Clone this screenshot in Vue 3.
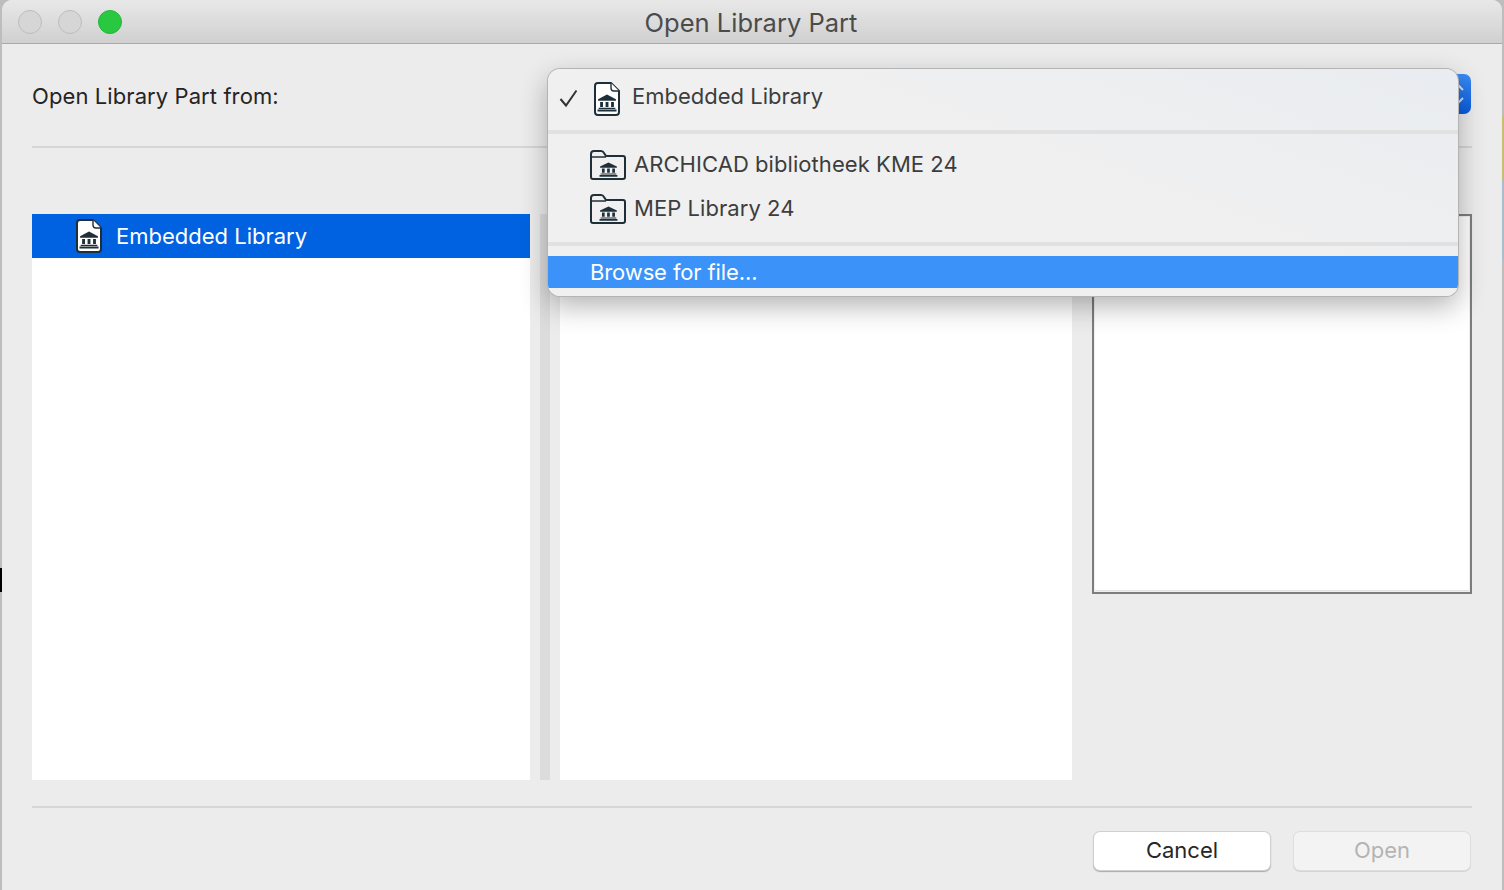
<script setup>
const folders = ['ARCHICAD bibliotheek KME 24', 'MEP Library 24']
</script>

<template>
  <div class="desktop">
    <i class="strip s-black"></i>
    <i class="strip s-olive"></i>
    <i class="strip s-steel"></i>
    <svg class="defs" width="0" height="0" aria-hidden="true">
      <defs>
        <g id="bank">
          <path d="M8 0.5 L15.5 4.8 V6.2 H0.5 V4.8 Z" fill="#1f2f3a"/>
          <path d="M2.2 7.2 H4.6 V11.8 H2.2 Z M6.8 7.2 H9.2 V11.8 H6.8 Z M11.4 7.2 H13.8 V11.8 H11.4 Z" fill="#1f2f3a"/>
          <path d="M1 12.4 H15 V13.6 H1 Z M0 14.2 H16 V16 H0 Z" fill="#1f2f3a"/>
        </g>
        <g id="doc">
          <path d="M4 1 H17 L25 9 V30 Q25 33 22 33 H4 Q1 33 1 30 V4 Q1 1 4 1 Z" fill="#fff" stroke="#1f2f3a" stroke-width="2"/>
          <path d="M17 1 V6 Q17 9 20 9 H25" fill="#fff" stroke="#1f2f3a" stroke-width="1.4"/>
          <use href="#bank" transform="translate(3.5 12) scale(1.19 1.1)"/>
        </g>
        <g id="folder">
          <path d="M1 4 Q1 1 4 1 H11 Q13 1 14 3 L16 6 H33 Q35 6 35 8 V27 Q35 29 33 29 H3 Q1 29 1 27 Z" fill="none" stroke="#1f2f3a" stroke-width="2"/>
          <path d="M1 7 H16" fill="none" stroke="#1f2f3a" stroke-width="1.4"/>
          <use href="#bank" transform="translate(9.5 12) scale(1.12 0.92)"/>
        </g>
      </defs>
    </svg>

    <div class="window">
      <header class="titlebar">
        <div class="lights">
          <span class="light"></span>
          <span class="light"></span>
          <span class="light green"></span>
        </div>
        <h1 class="title">Open Library Part</h1>
      </header>

      <main class="content">
        <div class="source-row">
          <span class="label">Open Library Part from:</span>
          <div class="select">
            <svg class="chevrons" width="16" height="24" viewBox="0 0 16 24">
              <path d="M3 8 L9 2 L15 8 M3 16 L9 22 L15 16" fill="none" stroke="#cfe0fb" stroke-width="2"/>
            </svg>
          </div>
        </div>
        <div class="rule"></div>

        <div class="panes">
          <div class="list">
            <div class="list-row">
              <svg class="doc" width="26" height="34" viewBox="0 0 26 34"><use href="#doc"/></svg>
              <span>Embedded Library</span>
            </div>
          </div>
          <div class="scroll"><span class="scroll-track"></span></div>
          <div class="list second"></div>
          <div class="preview"></div>
        </div>

        <div class="rule bottom"></div>
        <footer class="actions">
          <button class="btn">Cancel</button>
          <button class="btn disabled">Open</button>
        </footer>

        <div class="menu">
          <div class="menu-top">
            <svg class="check" width="22" height="20" viewBox="0 0 22 20">
              <path d="M2.5 11 L8 17.5 L18.5 2.5" fill="none" stroke="#333" stroke-width="2"/>
            </svg>
            <svg class="doc" width="26" height="34" viewBox="0 0 26 34"><use href="#doc"/></svg>
            <span>Embedded Library</span>
          </div>
          <div class="menu-sep"></div>
          <div class="menu-group">
            <div v-for="f in folders" :key="f" class="menu-folder">
              <svg width="36" height="30" viewBox="0 0 36 30"><use href="#folder"/></svg>
              <span>{{ f }}</span>
            </div>
          </div>
          <div class="menu-sep"></div>
          <div class="menu-browse">Browse for file...</div>
        </div>
      </main>
    </div>
  </div>
</template>

<style>
html, body { margin: 0; padding: 0; overflow: hidden; }
</style>

<style scoped>
.desktop {
  position: relative;
  width: 1504px;
  height: 890px;
  background: #bdbdbd;
  font-family: Inter, "Liberation Sans", sans-serif;
  overflow: hidden;
}
.defs { position: absolute; }
.strip { position: absolute; width: 2px; }
.s-black { left: 0; top: 568px; height: 24px; background: #000; }
.s-olive { right: 0; top: 116px; height: 64px; background: #c9bd74; }
.s-steel { right: 0; top: 180px; height: 80px; background: #a9bdca; }
.window {
  position: absolute;
  left: 2px;
  top: 0;
  width: 1500px;
  height: 890px;
  display: flex;
  flex-direction: column;
  background: #ececec;
  border-radius: 10px 10px 0 0;
  overflow: hidden;
}
.titlebar {
  position: relative;
  height: 43px;
  flex: none;
  display: flex;
  align-items: center;
  justify-content: center;
  background: linear-gradient(#e8e8e8, #d0d0d0);
  border-bottom: 1px solid #a9a9a9;
}
.lights {
  position: absolute;
  left: 16px;
  top: 10px;
  display: flex;
  gap: 16px;
}
.light {
  width: 24px;
  height: 24px;
  box-sizing: border-box;
  border-radius: 50%;
  background: #d6d6d6;
  border: 1px solid #bcbcbc;
}
.light.green { background: #28c940; border-color: #24b53a; }
.title {
  margin: 2px 0 0 -2px;
  font-size: 25.5px;
  font-weight: 400;
  color: #4b4b4b;
}
.content {
  position: relative;
  flex: 1;
  display: flex;
  flex-direction: column;
  padding: 0 30px;
}
.source-row {
  height: 102px;
  flex: none;
  display: flex;
  align-items: flex-start;
  justify-content: space-between;
}
.label {
  margin-top: 38px;
  font-size: 22px;
  line-height: 28px;
  letter-spacing: 0.09px;
  color: #242424;
}
.select {
  margin-top: 30px;
  margin-right: 1px;
  width: 920px;
  height: 40px;
  box-sizing: border-box;
  padding: 8px 7px 0 0;
  display: flex;
  justify-content: flex-end;
  border-radius: 7px;
  background: linear-gradient(#3a8bf5, #0a5ce0);
}
.rule {
  height: 2px;
  flex: none;
  background: #d6d6d6;
}
.panes {
  margin-top: 66px;
  height: 566px;
  flex: none;
  display: flex;
  align-items: flex-start;
}
.list {
  width: 498px;
  height: 566px;
  background: #fff;
}
.list-row {
  height: 44px;
  display: flex;
  align-items: center;
  gap: 14px;
  padding-left: 44px;
  background: #0062e1;
  color: #fff;
  font-size: 22px;
}
.scroll {
  width: 30px;
  height: 566px;
  display: flex;
  justify-content: center;
}
.scroll-track {
  width: 10px;
  height: 100%;
  background: #dcdcdc;
}
.list.second {
  width: 512px;
}
.preview {
  margin-left: 20px;
  width: 380px;
  height: 380px;
  box-sizing: border-box;
  background: #fff;
  border: 2px solid #7d7d7d;
  box-shadow: inset 0 0 0 1px #efefef, inset 0 -2px 0 #e2e2e2;
}
.bottom {
  margin-top: 26px;
}
.actions {
  margin-top: 24px;
  display: flex;
  justify-content: flex-end;
  gap: 24px;
  padding-right: 2px;
}
.btn {
  width: 176px;
  height: 38px;
  padding: 0 0 2px;
  border: 0;
  border-radius: 6px;
  background: #fff;
  font-family: inherit;
  font-size: 22px;
  color: #262626;
  box-shadow: 0 0 0 1px #d0d0d0, 0 1px 1px 1px #aaa;
}
.btn.disabled {
  background: #f3f3f3;
  color: #b4b4b4;
  box-shadow: 0 0 0 1px #dedede, 0 1px 0 1px #d4d4d4;
}
.menu {
  position: absolute;
  left: 546px;
  top: 25px;
  width: 910px;
  height: 227px;
  box-sizing: border-box;
  display: flex;
  flex-direction: column;
  border-radius: 12px;
  overflow: hidden;
  background: linear-gradient(200deg, #e9ecf0, #f0f0f0 45%);
  box-shadow: 0 0 0 1px #b4b4b4, 0 10px 28px rgba(0, 0, 0, 0.3);
  font-size: 22px;
  color: #3d3d3d;
}
.menu-top {
  height: 61px;
  flex: none;
  display: flex;
  align-items: center;
  padding-left: 10px;
}
.menu-top .check { margin-right: 14px; margin-top: -3px; }
.menu-top .doc { margin-right: 12px; margin-top: -1px; }
.menu-top span { margin-top: -7px; }
.menu-sep {
  height: 4px;
  flex: none;
  background: #e1e1e1;
}
.menu-group {
  height: 108px;
  flex: none;
  padding-top: 8px;
  box-sizing: border-box;
}
.menu-folder {
  height: 44px;
  display: flex;
  align-items: center;
  letter-spacing: 0.06px;
  gap: 8px;
  padding-left: 42px;
}
.menu-folder svg { margin-top: 2px; }
.menu-folder span { margin-top: -1px; }
.menu-browse {
  margin-top: 10px;
  height: 32px;
  flex: none;
  display: flex;
  align-items: center;
  padding-left: 42px;
  letter-spacing: -0.12px;
  background: #3b92f8;
  color: #fff;
}
</style>
